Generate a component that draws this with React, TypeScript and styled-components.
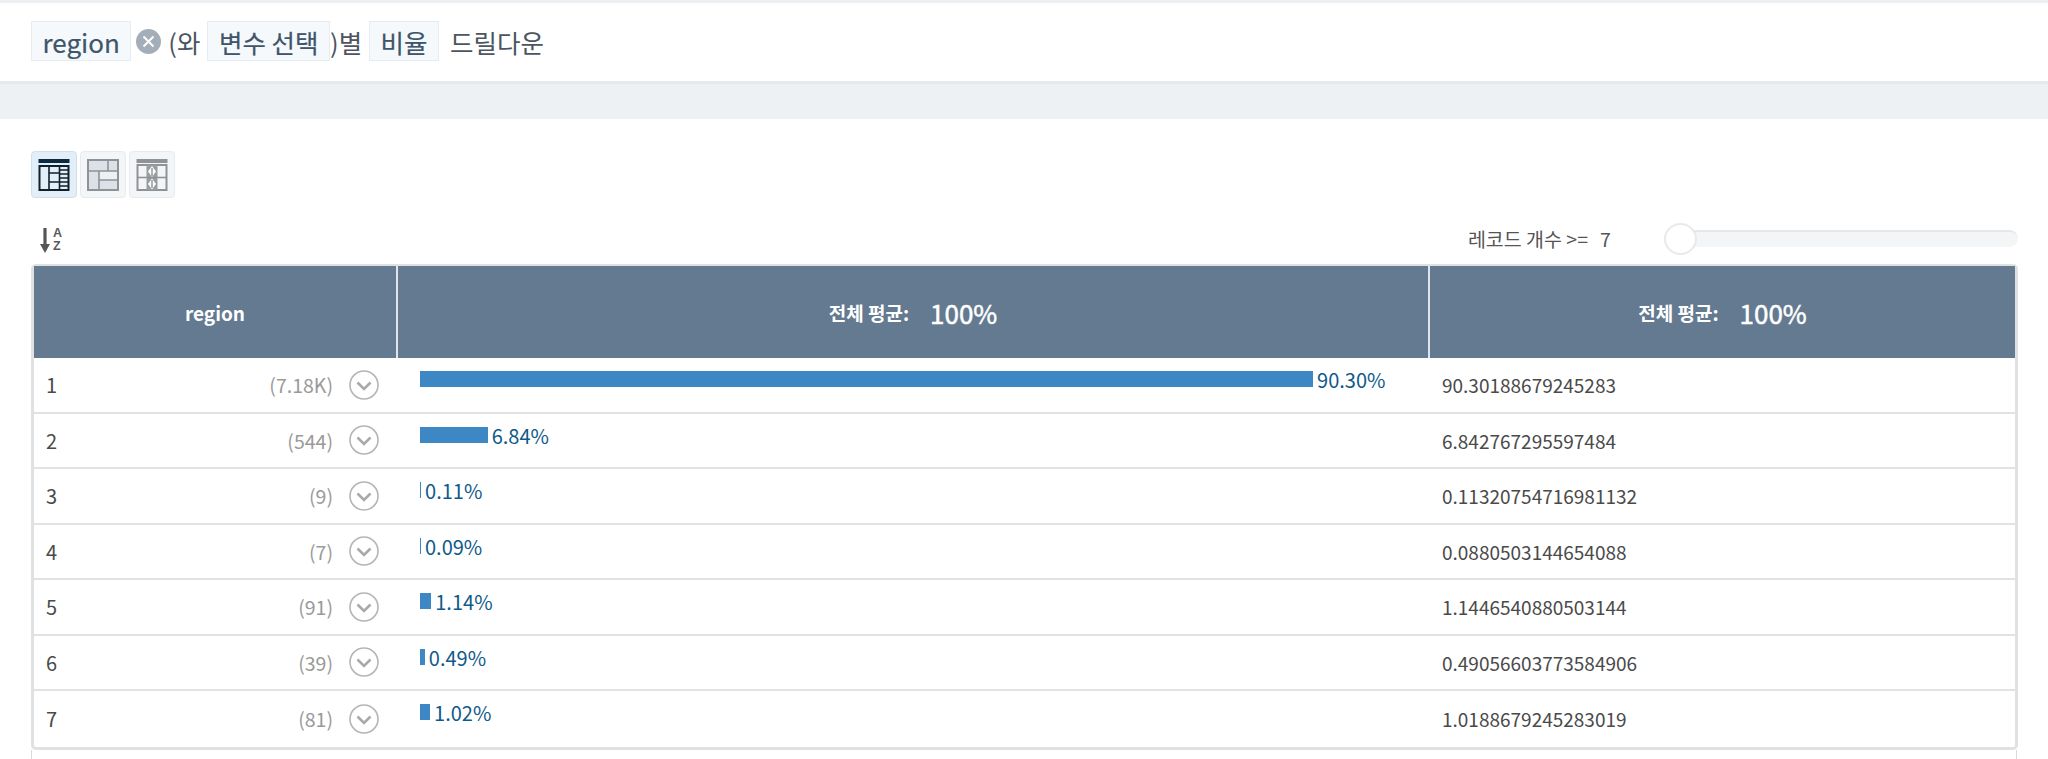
import React from 'react';
import styled, { createGlobalStyle } from 'styled-components';

const GlobalStyle = createGlobalStyle`
  html, body {
    margin: 0;
    padding: 0;
    background: #fff;
  }
  body {
    font-family: "Noto Sans CJK KR", "Noto Sans", sans-serif;
    color: #4a4a4a;
    overflow: hidden;
  }
`;

const Page = styled.div`
  width: 2048px;
  height: 759px;
  overflow: hidden;
  box-sizing: border-box;
  border-top: 3px solid #edf0f3;
`;

const QueryBar = styled.div`
  height: 78px;
  box-sizing: border-box;
  padding: 0 31px 2px;
  display: flex;
  align-items: center;
  font-size: 25.5px;
  color: #4c5560;
`;

const Chip = styled.span<{ $ml?: number; $mr?: number }>`
  display: inline-flex;
  align-items: center;
  height: 40px;
  box-sizing: border-box;
  padding: 0 10.5px;
  margin-left: ${(p) => p.$ml ?? 0}px;
  margin-right: ${(p) => p.$mr ?? 0}px;
  background: #f5f9fc;
  border: 1px solid #e6edf2;
  color: #3f556b;
  -webkit-text-stroke: 0.2px #3f556b;
`;

const FieldChip = styled(Chip)`
  font-size: 26px;
`;

const ClearIcon = styled.svg`
  width: 25px;
  height: 25px;
  margin: 0 7px 0 5px;
  flex: none;
`;

const Band = styled.div`
  height: 38px;
  background: #eef1f4;
  border-top: 3px solid #e6e9ec;
  box-sizing: border-box;
`;

const Body = styled.div`
  padding: 32px 30px 0 31px;
`;

const ViewButtons = styled.div`
  display: flex;
  gap: 3px;
`;

const ViewButton = styled.button<{ $active?: boolean }>`
  width: 46px;
  height: 47px;
  padding: 0;
  display: flex;
  align-items: center;
  justify-content: center;
  border-radius: 4px;
  border: 1px solid ${(p) => (p.$active ? '#cfe0ec' : '#e8ebed')};
  background: ${(p) => (p.$active ? '#e3eff8' : '#f3f5f6')};
`;

const ControlRow = styled.div`
  display: flex;
  align-items: center;
  justify-content: space-between;
  height: 32px;
  margin-top: 24px;
  margin-bottom: 10px;
`;

const SortIcon = styled.div`
  display: flex;
  align-items: center;
  gap: 3px;
  margin-left: 9px;
  margin-top: 4px;
`;

const SortLetters = styled.div`
  display: flex;
  flex-direction: column;
  font-family: "Liberation Sans", sans-serif;
  font-size: 12.5px;
  font-weight: 700;
  line-height: 13.5px;
  color: #5a5a5a;
`;

const RecordFilter = styled.div`
  display: flex;
  align-items: center;
  font-size: 19.5px;
  color: #555;
`;

const FilterValue = styled.span`
  margin-left: 12px;
  width: 64px;
`;

const SliderTrack = styled.div`
  width: 354px;
  height: 17px;
  background: #f4f5f6;
  border-top: 2px solid #e6e7e8;
  box-sizing: border-box;
  border-radius: 9px;
  display: flex;
  align-items: center;
`;

const SliderThumb = styled.div`
  width: 33px;
  height: 32px;
  border-radius: 50%;
  background: #fff;
  border: 2px solid #e8e9ea;
  box-sizing: border-box;
  flex: none;
`;

const Table = styled.div`
  border: 3px solid #dfe1e3;
  border-top-width: 2px;
  border-radius: 5px;
  box-sizing: border-box;
  width: 1987px;
`;

const Row = styled.div`
  display: grid;
  grid-template-columns: 364px 1032px 1fr;
  height: 55.5px;
  box-sizing: border-box;
  border-bottom: 2px solid #e0e3e5;
  &:last-child {
    border-bottom: none;
  }
`;

const HeaderRow = styled.div`
  display: grid;
  grid-template-columns: 364px 1032px 1fr;
  height: 92px;
  background: #637a90;
  color: #fff;
`;

const HeaderCell = styled.div`
  display: flex;
  align-items: center;
  justify-content: center;
  font-size: 19px;
  font-weight: 700;
  border-right: 2px solid #dfe5ea;
  &:last-child {
    border-right: none;
  }
`;

const HeaderValue = styled.span`
  font-size: 26px;
  font-weight: 400;
  -webkit-text-stroke: 0.5px #fff;
  margin-left: 21px;
`;

const RegionCell = styled.div`
  display: flex;
  align-items: center;
  padding-left: 12px;
  padding-right: 19px;
`;

const RegionName = styled.span`
  flex: 1;
  font-size: 20px;
  color: #4a4a4a;
`;

const RegionCount = styled.span`
  font-size: 19.5px;
  color: #9a9a9a;
  margin-right: 16px;
`;

const ExpandIcon = styled.svg`
  width: 30px;
  height: 30px;
  flex: none;
`;

const BarCell = styled.div`
  display: flex;
  align-items: flex-start;
  padding-left: 22px;
  padding-top: 13px;
`;

const Bar = styled.div`
  height: 16px;
  background: #3d87c4;
  margin-right: 4px;
`;

const BarLabel = styled.span`
  font-size: 20px;
  line-height: 18px;
  color: #0f5a8a;
`;

const ValueCell = styled.div`
  display: flex;
  align-items: center;
  padding-left: 12px;
  font-size: 19px;
  color: #4a4a4a;
`;

const BelowTable = styled.div`
  height: 20px;
  margin-right: 1px;
  border-left: 1px solid #d9dbdd;
  border-right: 1px solid #d9dbdd;
`;

const rows = [
  { name: '1', count: '(7.18K)', pct: 90.3, label: '90.30%', value: '90.30188679245283' },
  { name: '2', count: '(544)', pct: 6.84, label: '6.84%', value: '6.842767295597484' },
  { name: '3', count: '(9)', pct: 0.11, label: '0.11%', value: '0.11320754716981132' },
  { name: '4', count: '(7)', pct: 0.09, label: '0.09%', value: '0.0880503144654088' },
  { name: '5', count: '(91)', pct: 1.14, label: '1.14%', value: '1.1446540880503144' },
  { name: '6', count: '(39)', pct: 0.49, label: '0.49%', value: '0.49056603773584906' },
  { name: '7', count: '(81)', pct: 1.02, label: '1.02%', value: '1.0188679245283019' },
];

const TableViewIcon = () => (
  <svg width="32" height="32" viewBox="0 0 32 32">
    <rect x="0.5" y="0" width="31" height="4" fill="#0c2b40" />
    <rect x="1.5" y="7" width="29" height="24" fill="#e3eff8" stroke="#10202c" strokeWidth="2" />
    <path d="M11 7v24M21.5 7v24M11 14h10.5M11 23h10.5M21.5 11h9M21.5 15h9M21.5 19h9M21.5 23h9M21.5 27h9" stroke="#10202c" strokeWidth="1.6" fill="none" />
  </svg>
);

const TreemapViewIcon = () => (
  <svg width="32" height="32" viewBox="0 0 32 32">
    <rect x="1" y="1" width="30" height="30" fill="#dbe1e7" stroke="#8f9398" strokeWidth="2" />
    <rect x="12" y="12" width="18" height="9" fill="#eef1f4" />
    <path d="M21 1v11M1 12h30M12 12v19M12 21h19" stroke="#8f9398" strokeWidth="1.6" fill="none" />
  </svg>
);

const CrossViewIcon = () => (
  <svg width="32" height="32" viewBox="0 0 32 32">
    <rect x="0.5" y="0" width="31" height="4" fill="#8f9398" />
    <rect x="1.5" y="6" width="29" height="25" fill="#f3f5f6" stroke="#8f9398" strokeWidth="2" />
    <rect x="10.5" y="6" width="11" height="25" fill="#9a9da0" />
    <path d="M1 18.5h30" stroke="#8f9398" strokeWidth="1.6" fill="none" />
    <path d="M16 7l-4 5.5 4 5.5 4-5.5zM16 19.5l-4 5.5 4 5.5 4-5.5z" fill="#fff" />
    <path d="M16 9v8M16 21v8" stroke="#8f9398" strokeWidth="1.4" />
  </svg>
);

const App: React.FC = () => (
  <>
    <GlobalStyle />
    <Page>
      <QueryBar>
        <FieldChip>region</FieldChip>
        <ClearIcon viewBox="0 0 25 25">
          <circle cx="12.5" cy="12.5" r="12.5" fill="#a3aeb8" />
          <path d="M7.5 7.5l10 10M17.5 7.5l-10 10" stroke="#fff" strokeWidth="2" />
        </ClearIcon>
        <span>(와</span>
        <Chip $ml={7}>변수 선택</Chip>
        <span>)별</span>
        <Chip $ml={7} $mr={11}>비율</Chip>
        <span>드릴다운</span>
      </QueryBar>
      <Band />
      <Body>
        <ViewButtons>
          <ViewButton $active><TableViewIcon /></ViewButton>
          <ViewButton><TreemapViewIcon /></ViewButton>
          <ViewButton><CrossViewIcon /></ViewButton>
        </ViewButtons>
        <ControlRow>
          <SortIcon>
            <svg width="10" height="25" viewBox="0 0 10 25">
              <path d="M5 0v17" stroke="#555" strokeWidth="3.2" />
              <path d="M0 16h10l-5 9z" fill="#555" />
            </svg>
            <SortLetters>
              <span>A</span>
              <span>Z</span>
            </SortLetters>
          </SortIcon>
          <RecordFilter>
            <span>레코드 개수 &gt;=</span>
            <FilterValue>7</FilterValue>
            <SliderTrack>
              <SliderThumb />
            </SliderTrack>
          </RecordFilter>
        </ControlRow>
        <Table>
          <HeaderRow>
            <HeaderCell>region</HeaderCell>
            <HeaderCell>
              전체 평균:<HeaderValue>100%</HeaderValue>
            </HeaderCell>
            <HeaderCell>
              전체 평균:<HeaderValue>100%</HeaderValue>
            </HeaderCell>
          </HeaderRow>
          {rows.map((r) => (
            <Row key={r.name}>
              <RegionCell>
                <RegionName>{r.name}</RegionName>
                <RegionCount>{r.count}</RegionCount>
                <ExpandIcon viewBox="0 0 30 30">
                  <circle cx="15" cy="15" r="14" fill="#fff" stroke="#b5b5b5" strokeWidth="1.6" />
                  <path d="M8.5 12.5l6.5 6.5 6.5-6.5" fill="none" stroke="#a9a9a9" strokeWidth="2.6" />
                </ExpandIcon>
              </RegionCell>
              <BarCell>
                <Bar style={{ width: `${Math.max(r.pct * 9.89, 1)}px` }} />
                <BarLabel>{r.label}</BarLabel>
              </BarCell>
              <ValueCell>{r.value}</ValueCell>
            </Row>
          ))}
        </Table>
        <BelowTable />
      </Body>
    </Page>
  </>
);

export default App;
